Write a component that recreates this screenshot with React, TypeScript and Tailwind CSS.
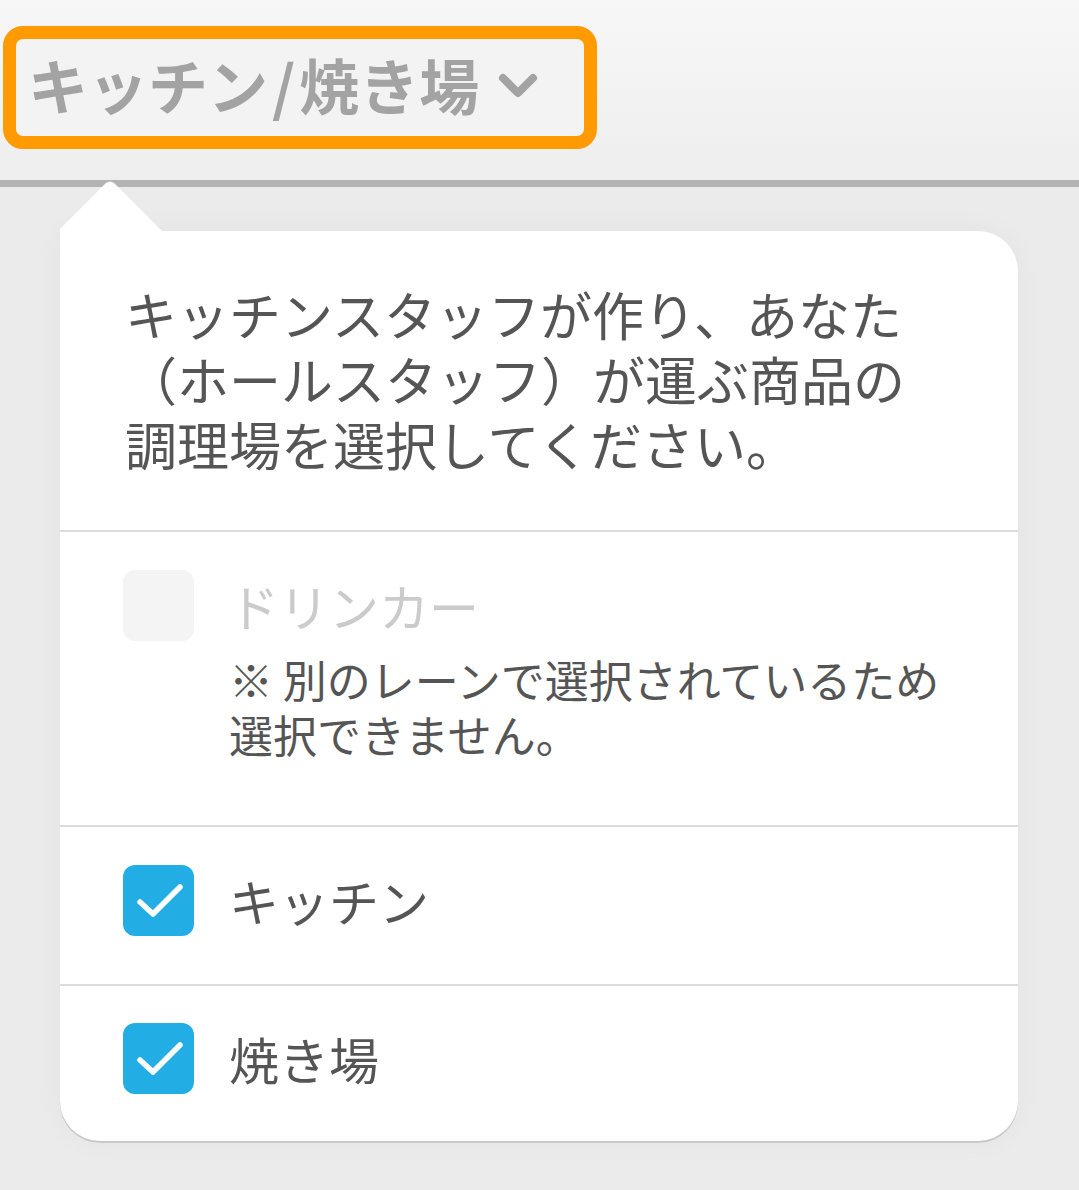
import React from 'react';

const font = { fontFamily: '"Noto Sans CJK JP", "Noto Sans", sans-serif' };

function Check({ checked, disabled }: { checked?: boolean; disabled?: boolean }) {
  if (disabled) {
    return <div className="h-[71px] w-[71px] shrink-0 rounded-[12px] bg-[#f4f4f4]" />;
  }
  return (
    <div className="flex h-[71px] w-[71px] shrink-0 items-center justify-center rounded-[12px] bg-[#22aee4]">
      {checked && (
        <svg width="71" height="71" viewBox="0 0 71 71">
          <path
            d="M17 37 L30 49 L57 22"
            fill="none"
            stroke="#fff"
            strokeWidth="5.5"
            strokeLinecap="round"
            strokeLinejoin="round"
          />
        </svg>
      )}
    </div>
  );
}

export default function App() {
  return (
    <div className="h-[1190px] w-[1079px] overflow-hidden bg-[#ebebeb]" style={font}>
      {/* header */}
      <div className="h-[180px] bg-gradient-to-b from-[#f7f7f7] to-[#eeeeee] pl-[3px] pt-[26px]">
        <div className="flex h-[123px] w-[594px] items-center rounded-[20px] border-[13px] border-[#ff9a00] bg-[#f3f3f3] pb-[8px] pl-[12px]">
          <span className="text-[60px] font-bold leading-none text-[#a3a3a3]">
            キッチン<span className="mx-[4px]">/</span>焼き場
          </span>
          <svg width="42" height="28" viewBox="0 0 42 28" className="ml-[18px] mt-[4px]">
            <path d="M6 6 L21 21 L36 6" fill="none" stroke="#a3a3a3" strokeWidth="8" strokeLinecap="round" strokeLinejoin="round" />
          </svg>
        </div>
      </div>
      <div className="h-[7px] bg-[#b3b3b3]" />

      {/* popover */}
      <div className="relative ml-[60px] mt-[44px] w-[958px]">
        <svg width="106" height="52" viewBox="0 0 106 52" className="absolute left-0 top-[-50px]">
          <path d="M0 52 L0 48 L46 2 Q50 -1 54 2 L104 52 Z" fill="#fff" />
        </svg>
        <div className="rounded-[40px] rounded-tl-none bg-white text-[#555555] shadow-[0_2px_0_#c9c9c9,0_0_30px_rgba(0,0,0,0.04)]">
          <div className="px-[65px] pb-[54px] pt-[50px] text-[52px] leading-[65px]">
            キッチンスタッフが作り、あなた
            <br />
            （ホールスタッフ）が運ぶ商品の
            <br />
            調理場を選択してください。
          </div>
          <div className="h-[2px] bg-[#dcdcdc]" />

          <div className="flex gap-[35px] px-[63px] pb-[63px] pt-[38px]">
            <Check disabled />
            <div>
              <div className="text-[50px] leading-[71px] text-[#cbcbcb]">ドリンカー</div>
              <div className="mt-[11px] text-[44px] leading-[55px] text-[#555555]">
                ※ 別のレーンで選択されているため
                <br />
                選択できません。
              </div>
            </div>
          </div>
          <div className="h-[2px] bg-[#dcdcdc]" />

          <div className="flex items-center gap-[35px] px-[63px] pb-[48px] pt-[38px]">
            <Check checked />
            <div className="text-[50px] leading-[71px]">キッチン</div>
          </div>
          <div className="h-[2px] bg-[#dcdcdc]" />

          <div className="flex items-center gap-[35px] px-[63px] pb-[47px] pt-[37px]">
            <Check checked />
            <div className="text-[50px] leading-[71px]">焼き場</div>
          </div>
        </div>
      </div>
    </div>
  );
}
